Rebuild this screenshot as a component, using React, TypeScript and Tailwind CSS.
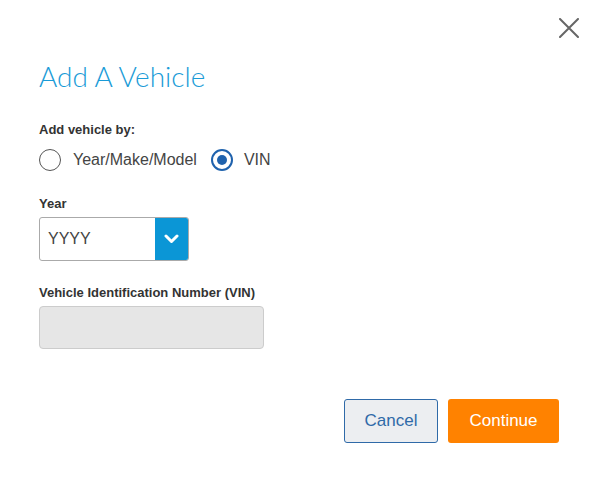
import React, { useState } from 'react';

export default function App() {
  const [mode, setMode] = useState<'ymm' | 'vin'>('vin');

  return (
    <div className="w-[597px] h-[502px] bg-white relative font-['Liberation_Sans',Arial,sans-serif] text-[#333]">
      {/* Close */}
      <button className="absolute top-[18px] right-[18px] w-[20px] h-[20px]" aria-label="Close">
        <svg viewBox="0 0 20 20" width="20" height="20" stroke="#666" strokeWidth="2" strokeLinecap="round">
          <path d="M1 1 L19 19 M19 1 L1 19" />
        </svg>
      </button>

      <div className="pl-[39px] pt-[60px] pr-[38px]">
        <h1 className="font-['Lato',sans-serif] font-light text-[28px] leading-[32px] text-[#1a9bd7]">Add A Vehicle</h1>

        <div className="mt-[30px] text-[13px] font-bold leading-[16px]">Add vehicle by:</div>
        <div className="mt-[11px] flex items-center h-[22px] text-[16px] text-[#444]">
          <label className="flex items-center cursor-pointer" onClick={() => setMode('ymm')}>
            <span className={`w-[22px] h-[22px] rounded-full border flex items-center justify-center ${mode === 'ymm' ? 'border-2 border-[#1f62ad]' : 'border-[#555]'}`}>
              {mode === 'ymm' && <span className="w-[10px] h-[10px] rounded-full bg-[#1f62ad]" />}
            </span>
            <span className="ml-[12px]">Year/Make/Model</span>
          </label>
          <label className="flex items-center cursor-pointer ml-[14px]" onClick={() => setMode('vin')}>
            <span className={`w-[22px] h-[22px] rounded-full border flex items-center justify-center ${mode === 'vin' ? 'border-2 border-[#1f62ad]' : 'border-[#555]'}`}>
              {mode === 'vin' && <span className="w-[10px] h-[10px] rounded-full bg-[#1f62ad]" />}
            </span>
            <span className="ml-[11px]">VIN</span>
          </label>
        </div>

        <div className="mt-[25px] text-[13px] font-bold leading-[16px]">Year</div>
        <div className="mt-[5px] flex w-[150px] h-[44px] border border-[#aaa] rounded-[3px] overflow-hidden">
          <div className="flex-1 flex items-center pl-[8px] text-[16px] text-[#444]">YYYY</div>
          <div className="w-[33px] bg-[#0b96d6] flex items-center justify-center">
            <svg width="15" height="10" viewBox="0 0 15 10" fill="none" stroke="#fff" strokeWidth="3" strokeLinecap="round" strokeLinejoin="round">
              <path d="M2 2 L7.5 7.5 L13 2" />
            </svg>
          </div>
        </div>

        <div className="mt-[24px] text-[13px] font-bold leading-[16px]">Vehicle Identification Number (VIN)</div>
        <div className="mt-[5px] w-[225px] h-[43px] bg-[#e6e6e6] border border-[#ccc] rounded-[4px]" />

        <div className="mt-[50px] flex justify-end gap-[10px]">
          <button className="w-[94px] h-[44px] bg-[#eceef1] border border-[#2f6aa8] rounded-[3px] text-[17px] text-[#2f6aa8]">Cancel</button>
          <button className="w-[111px] h-[44px] bg-[#ff8200] rounded-[3px] text-[17px] text-white">Continue</button>
        </div>
      </div>
    </div>
  );
}
